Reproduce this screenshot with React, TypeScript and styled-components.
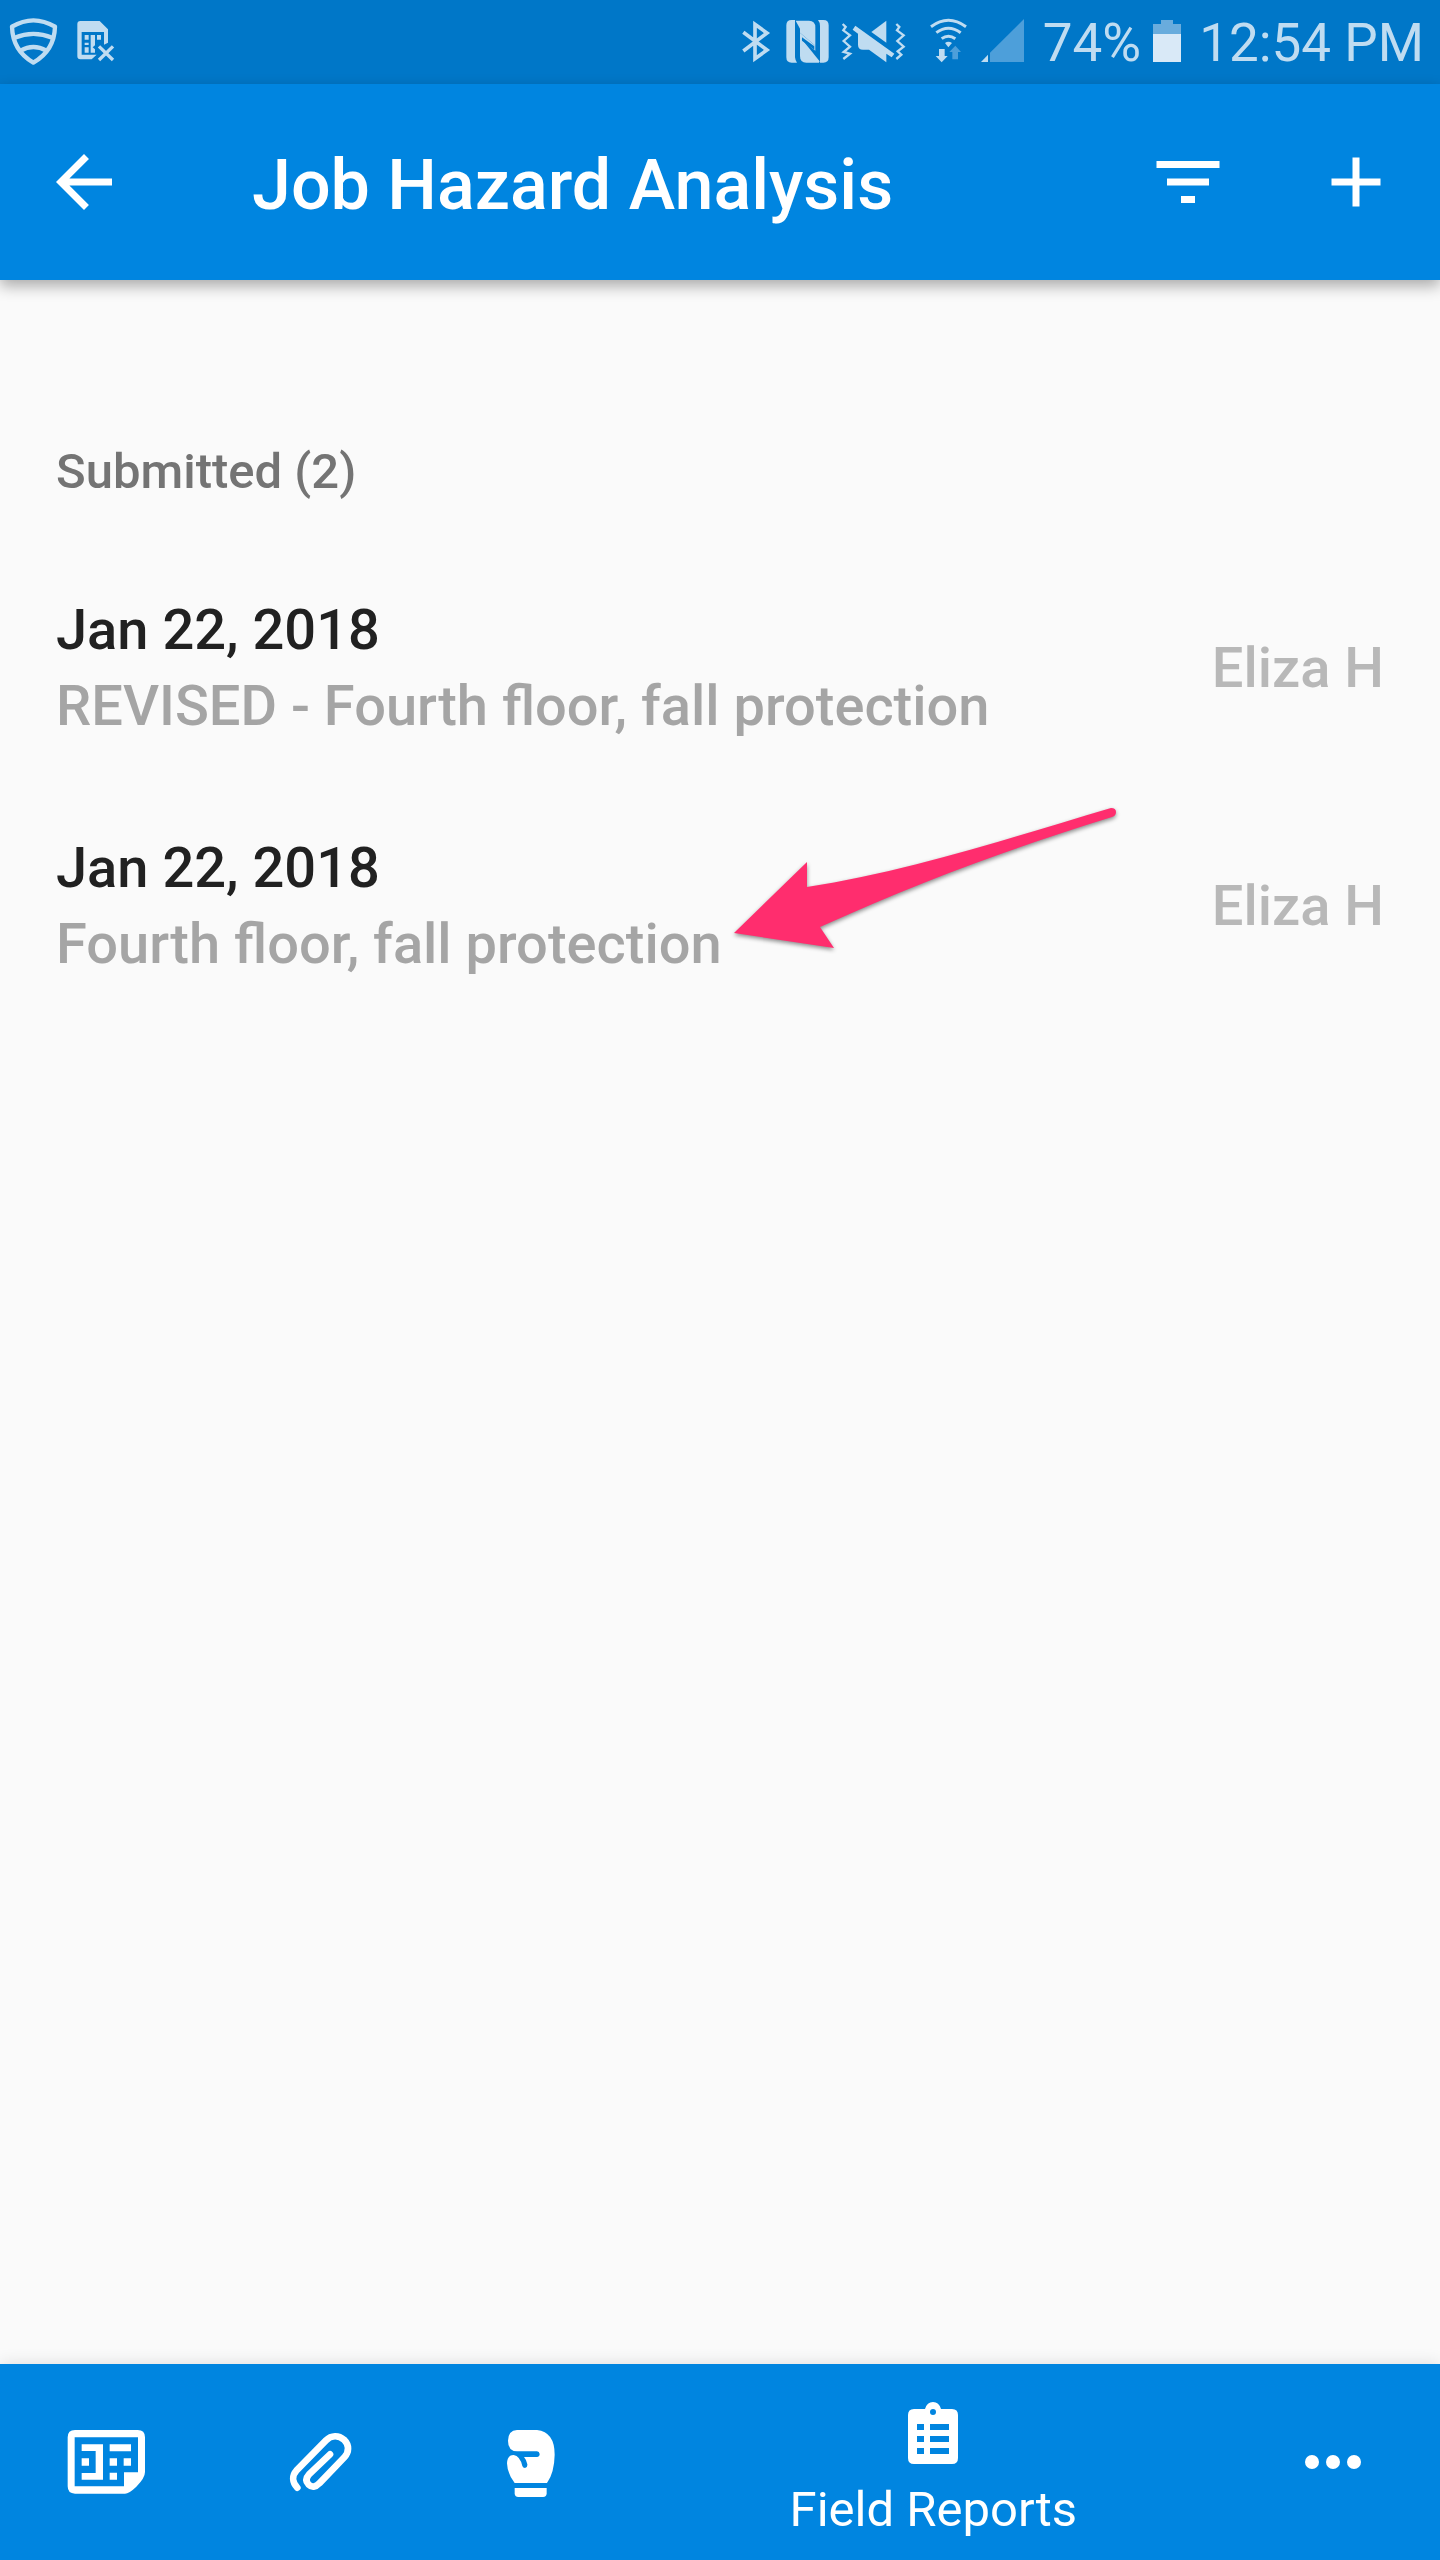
import React from "react";
import styled, { createGlobalStyle } from "styled-components";

const color = {
  status: "#0077c8",
  brand: "#0085e0",
  page: "#fafafa",
  statusInk: "#bfdcf1",
  statusDim: "#4d9fda",
  heading: "#747474",
  ink: "#212121",
  secondary: "#a5a5a5",
  author: "#b8b8b8",
  pointer: "#ff2d6e",
};

const GlobalStyle = createGlobalStyle`
  *, *::before, *::after { box-sizing: border-box; }
  body {
    margin: 0;
    background: ${color.page};
    font-family: Roboto, "Liberation Sans", sans-serif;
  }
`;

const Screen = styled.div`
  display: flex;
  flex-direction: column;
  min-height: 100vh;
`;

const StatusBar = styled.div`
  display: flex;
  align-items: center;
  justify-content: space-between;
  height: 84px;
  padding: 0 16px 0 8px;
  background: ${color.status};
  color: ${color.statusInk};
`;

const StatusGroup = styled.div<{ $gap: number }>`
  display: flex;
  align-items: center;
  gap: ${(p) => p.$gap}px;
`;

const StatusText = styled.span`
  padding-top: 2px;
  font-size: 53px;
  line-height: 60px;
  white-space: nowrap;
`;

const StatusIcon = styled.svg<{ $width: number }>`
  display: block;
  flex: none;
  width: ${(p) => p.$width}px;
  height: 48px;
`;

const AppBar = styled.header`
  position: relative;
  z-index: 1;
  display: flex;
  align-items: center;
  height: 196px;
  background: ${color.brand};
  color: #fff;
  box-shadow: 0 6px 14px rgba(0, 0, 0, 0.32);
`;

const Title = styled.h1`
  flex: 1;
  margin: 0;
  padding: 6px 0 0 84px;
  font-size: 70px;
  font-weight: 500;
  line-height: 84px;
  white-space: nowrap;
`;

const IconButton = styled.button`
  display: flex;
  flex: none;
  align-items: center;
  justify-content: center;
  width: 168px;
  height: 100%;
  padding: 0;
  border: 0;
  background: none;
  color: inherit;
  cursor: pointer;
`;

const Icon = styled.svg<{ $size?: number }>`
  display: block;
  flex: none;
  width: ${(p) => p.$size ?? 84}px;
  height: ${(p) => p.$size ?? 84}px;
`;

const Main = styled.main`
  flex: 1;
  padding-top: 114px;
`;

const SectionTitle = styled.h2`
  margin: 0;
  padding: 0 56px;
  color: ${color.heading};
  font-size: 49px;
  font-weight: 500;
  line-height: 155px;
`;

const ReportList = styled.ul`
  margin: 0;
  padding: 0;
  list-style: none;
`;

const ReportLink = styled.a`
  display: flex;
  align-items: center;
  justify-content: space-between;
  height: 238px;
  padding: 0 56px;
  font-size: 56px;
  font-weight: 500;
  line-height: 76px;
  text-decoration: none;
`;

const ReportText = styled.div`
  display: flex;
  flex-direction: column;
  align-items: flex-start;
`;

const ReportDate = styled.span`
  color: ${color.ink};
`;

const ReportSummary = styled.span`
  position: relative;
  color: ${color.secondary};
`;

const Author = styled.span`
  color: ${color.author};
`;

const Pointer = styled.svg`
  position: absolute;
  bottom: 22px;
  left: 100%;
  width: 410px;
  height: 170px;
  overflow: visible;
  filter: drop-shadow(0 2px 2px rgba(0, 0, 0, 0.45));
  pointer-events: none;
`;

const BottomNav = styled.nav`
  display: grid;
  grid-template-columns: 4fr 4fr 4fr 11fr 4fr;
  height: 196px;
  background: ${color.brand};
  box-shadow: 0 0 16px rgba(0, 0, 0, 0.12);
`;

const NavItem = styled.button<{ $active?: boolean }>`
  display: flex;
  flex-direction: column;
  align-items: center;
  justify-content: center;
  gap: 18px;
  padding: ${(p) => (p.$active ? "14px 0 0" : "0")};
  border: 0;
  background: none;
  color: #fff;
  font-family: inherit;
  font-size: 49px;
  line-height: 56px;
  cursor: pointer;
`;

function ShieldIcon() {
  return (
    <StatusIcon $width={52} viewBox="24 54 156 144" fill="none" stroke={color.statusInk} strokeWidth="13">
      <path d="M36 80Q100 42 165 80Q163 152 100 188Q38 152 36 80Z" strokeLinejoin="round" />
      <path d="M44 113Q100 90 157 113M62 152Q100 130 139 152" />
    </StatusIcon>
  );
}

function SimErrorIcon() {
  return (
    <StatusIcon $width={40} viewBox="228 54 120 144">
      <path
        fill={color.statusInk}
        d="M241 63H299L324 88V128L312 134V96H245V164H290L275 178H241Q232 178 232 169V72Q232 63 241 63Z"
      />
      <path
        fill={color.statusInk}
        d="M254 105H266V119H254ZM272 105H285V136L278 142L285 148V158H272ZM291 105H303V119H291ZM254 128H266V135H254ZM254 142H266V158H254Z"
      />
      <path stroke={color.statusInk} strokeWidth="10" d="M297 139L339 180M339 139L297 180" />
    </StatusIcon>
  );
}

function BluetoothIcon() {
  return (
    <StatusIcon $width={36} viewBox="60 54 108 144">
      <path
        fill="none"
        stroke={color.statusInk}
        strokeWidth="11"
        d="M73 97L144 150L108 176V73L144 99L73 153"
      />
    </StatusIcon>
  );
}

function NfcIcon() {
  return (
    <StatusIcon $width={48} viewBox="192 54 144 144" fill={color.statusInk}>
      <path d="M218 60H228V172Q229 182 234 188H218Q202 188 202 172V76Q202 60 218 60Z" />
      <path d="M297 60H313Q329 60 329 76V172Q329 188 313 188H303V78Q303 67 297 60Z" />
      <path d="M230 62H270Q289 62 289 82V137L243 98V86Z" />
      <path d="M243 111L302 184L300 188H262Q243 188 243 168Z" />
      <path d="M243 98L289 137V152L243 114Z" />
      <path fill={color.status} d="M249 112L286 139V149L249 122Z" />
    </StatusIcon>
  );
}

function VibrateMuteIcon() {
  return (
    <StatusIcon $width={72} viewBox="360 54 216 144">
      <path
        fill="none"
        stroke={color.statusInk}
        strokeWidth="7"
        d="M371 72L380 81L373 91L393 106L374 123L393 140L374 156L393 161L373 177M532 72L541 81L534 91L554 106L535 123L554 140L536 154L547 164L532 177"
      />
      <g fill={color.statusInk}>
        <path d="M457 96L502 62V128Z" />
        <path d="M409 77L526 161L518 172L502 161V187L450 149H432Q417 149 417 134V101L401 89Z" />
      </g>
    </StatusIcon>
  );
}

function WifiIcon() {
  return (
    <StatusIcon $width={52} viewBox="600 54 156 144">
      <g fill="none" stroke={color.statusInk} strokeWidth="9">
        <path d="M636 80Q688 42 741 80" />
        <path d="M652 98Q688 71 725 98" />
        <path d="M668 116Q688 101 709 116" />
      </g>
      <path fill={color.statusInk} d="M678 129Q688 121 699 129L688 142Z" />
      <path fill={color.statusInk} d="M660 147H677V168H686L668 187L650 168H660Z" />
      <path fill={color.statusDim} d="M700 178H717V156H726L709 137L691 156H700Z" />
    </StatusIcon>
  );
}

function SignalIcon() {
  return (
    <StatusIcon $width={56} viewBox="780 54 168 144">
      <path fill={color.statusDim} d="M813 158L915 57V186H813Z" />
      <path fill={color.statusInk} d="M786 186L807 164V186Z" />
    </StatusIcon>
  );
}

function BatteryIcon() {
  return (
    <StatusIcon $width={42} viewBox="357 54 126 144">
      <path fill="#69acdd" d="M369 72H393V60H429V72H453V102H369Z" />
      <path fill="#d9e9f7" d="M369 102H453V186H369Z" />
    </StatusIcon>
  );
}

function BackIcon() {
  return (
    <Icon viewBox="0 0 24 24" fill="currentColor">
      <path d="M20 11H7.83l5.59-5.59L12 4l-8 8 8 8 1.41-1.41L7.83 13H20v-2z" />
    </Icon>
  );
}

function FilterIcon() {
  return (
    <Icon viewBox="0 0 24 24" fill="currentColor">
      <path d="M10 18h4v-2h-4v2zM3 6v2h18V6H3zm3 7h12v-2H6v2z" />
    </Icon>
  );
}

function AddIcon() {
  return (
    <Icon viewBox="0 0 24 24" fill="currentColor">
      <path d="M19 13h-6v6h-2v-6H5v-2h6V5h2v6h6v2z" />
    </Icon>
  );
}

function PlansIcon() {
  return (
    <Icon viewBox="104 210 252 252" fill="currentColor">
      <path
        fillRule="evenodd"
        d="M134 240H322Q344 240 344 262V366Q344 384 318 410Q296 431 284 431H134Q112 431 112 409V262Q112 240 134 240ZM133 262V409H281V367H323V262Z"
      />
      <path d="M154 283H218V389H154V369H196V303H154ZM154 325H176V347H154ZM238 283H302V304H238ZM238 325H260V347H238ZM280 325H302V347H280ZM238 368H260V389H238Z" />
    </Icon>
  );
}

function PaperclipIcon() {
  return (
    <Icon viewBox="744 210 252 252">
      <path
        fill="none"
        stroke="currentColor"
        strokeWidth="20"
        strokeLinecap="round"
        d="M802 413C786 396 786 376 799 362L888 271C904 255 926 255 942 269C959 286 957 306 943 322L868 400C857 412 845 413 836 404C826 394 828 383 838 372L900 313"
      />
    </Icon>
  );
}

function GloveIcon() {
  return (
    <Icon viewBox="94 210 252 252" fill="currentColor">
      <path d="M172 240H232Q285 246 285 314Q284 368 262 399H165Q142 368 142 340Q143 315 162 315Q181 318 188 348Q190 354 196 354Q204 353 203 343Q201 330 193 321H232Q240 320 240 312Q239 304 232 304H172Q145 303 145 272Q146 241 172 240Z" />
      <path d="M165 414H261V430Q261 441 250 441H176Q165 441 165 430Z" />
    </Icon>
  );
}

function ClipboardIcon() {
  return (
    <Icon $size={64} viewBox="0 0 64 64" fill="currentColor">
      <path
        fillRule="evenodd"
        d="M13 9H24Q26 2 32 2Q38 2 40 9H51Q57 9 57 15V58Q57 64 51 64H13Q7 64 7 58V15Q7 9 13 9ZM32 9A3 3 0 1 0 32 15A3 3 0 1 0 32 9ZM16 24V30H23V24ZM29 24V30H48V24ZM16 36V42H23V36ZM29 36V42H48V36ZM16 48V54H23V48ZM29 48V54H48V48Z"
      />
    </Icon>
  );
}

function MoreIcon() {
  return (
    <Icon viewBox="0 0 84 84" fill="currentColor">
      <circle cx="21" cy="42" r="7" />
      <circle cx="42" cy="42" r="7" />
      <circle cx="63" cy="42" r="7" />
    </Icon>
  );
}

function PointerArrow() {
  return (
    <Pointer viewBox="3 0 410 170" aria-hidden="true">
      <path
        fill={color.pointer}
        d="M15 143L88 72V97C190 82 300 45 392 18Q397 18 397 22Q397 26 393 27C290 59 200 92 101 137L115 158Z"
      />
    </Pointer>
  );
}

const reports = [
  { date: "Jan 22, 2018", summary: "REVISED - Fourth floor, fall protection", author: "Eliza H" },
  { date: "Jan 22, 2018", summary: "Fourth floor, fall protection", author: "Eliza H", marked: true },
];

export default function App() {
  return (
    <Screen>
      <GlobalStyle />
      <StatusBar>
        <StatusGroup $gap={16}>
          <ShieldIcon />
          <SimErrorIcon />
        </StatusGroup>
        <StatusGroup $gap={8}>
          <BluetoothIcon />
          <NfcIcon />
          <VibrateMuteIcon />
          <WifiIcon />
          <SignalIcon />
          <StatusText>74%</StatusText>
          <BatteryIcon />
          <StatusText>12:54 PM</StatusText>
        </StatusGroup>
      </StatusBar>
      <AppBar>
        <IconButton aria-label="Back">
          <BackIcon />
        </IconButton>
        <Title>Job Hazard Analysis</Title>
        <IconButton aria-label="Filter">
          <FilterIcon />
        </IconButton>
        <IconButton aria-label="Add">
          <AddIcon />
        </IconButton>
      </AppBar>
      <Main>
        <SectionTitle>Submitted ({reports.length})</SectionTitle>
        <ReportList>
          {reports.map((report) => (
            <li key={report.summary}>
              <ReportLink href="#report">
                <ReportText>
                  <ReportDate>{report.date}</ReportDate>
                  <ReportSummary>
                    {report.summary}
                    {report.marked && <PointerArrow />}
                  </ReportSummary>
                </ReportText>
                <Author>{report.author}</Author>
              </ReportLink>
            </li>
          ))}
        </ReportList>
      </Main>
      <BottomNav>
        <NavItem aria-label="Plans">
          <PlansIcon />
        </NavItem>
        <NavItem aria-label="Attachments">
          <PaperclipIcon />
        </NavItem>
        <NavItem aria-label="Punch list">
          <GloveIcon />
        </NavItem>
        <NavItem $active aria-current="page">
          <ClipboardIcon />
          Field Reports
        </NavItem>
        <NavItem aria-label="More">
          <MoreIcon />
        </NavItem>
      </BottomNav>
    </Screen>
  );
}
